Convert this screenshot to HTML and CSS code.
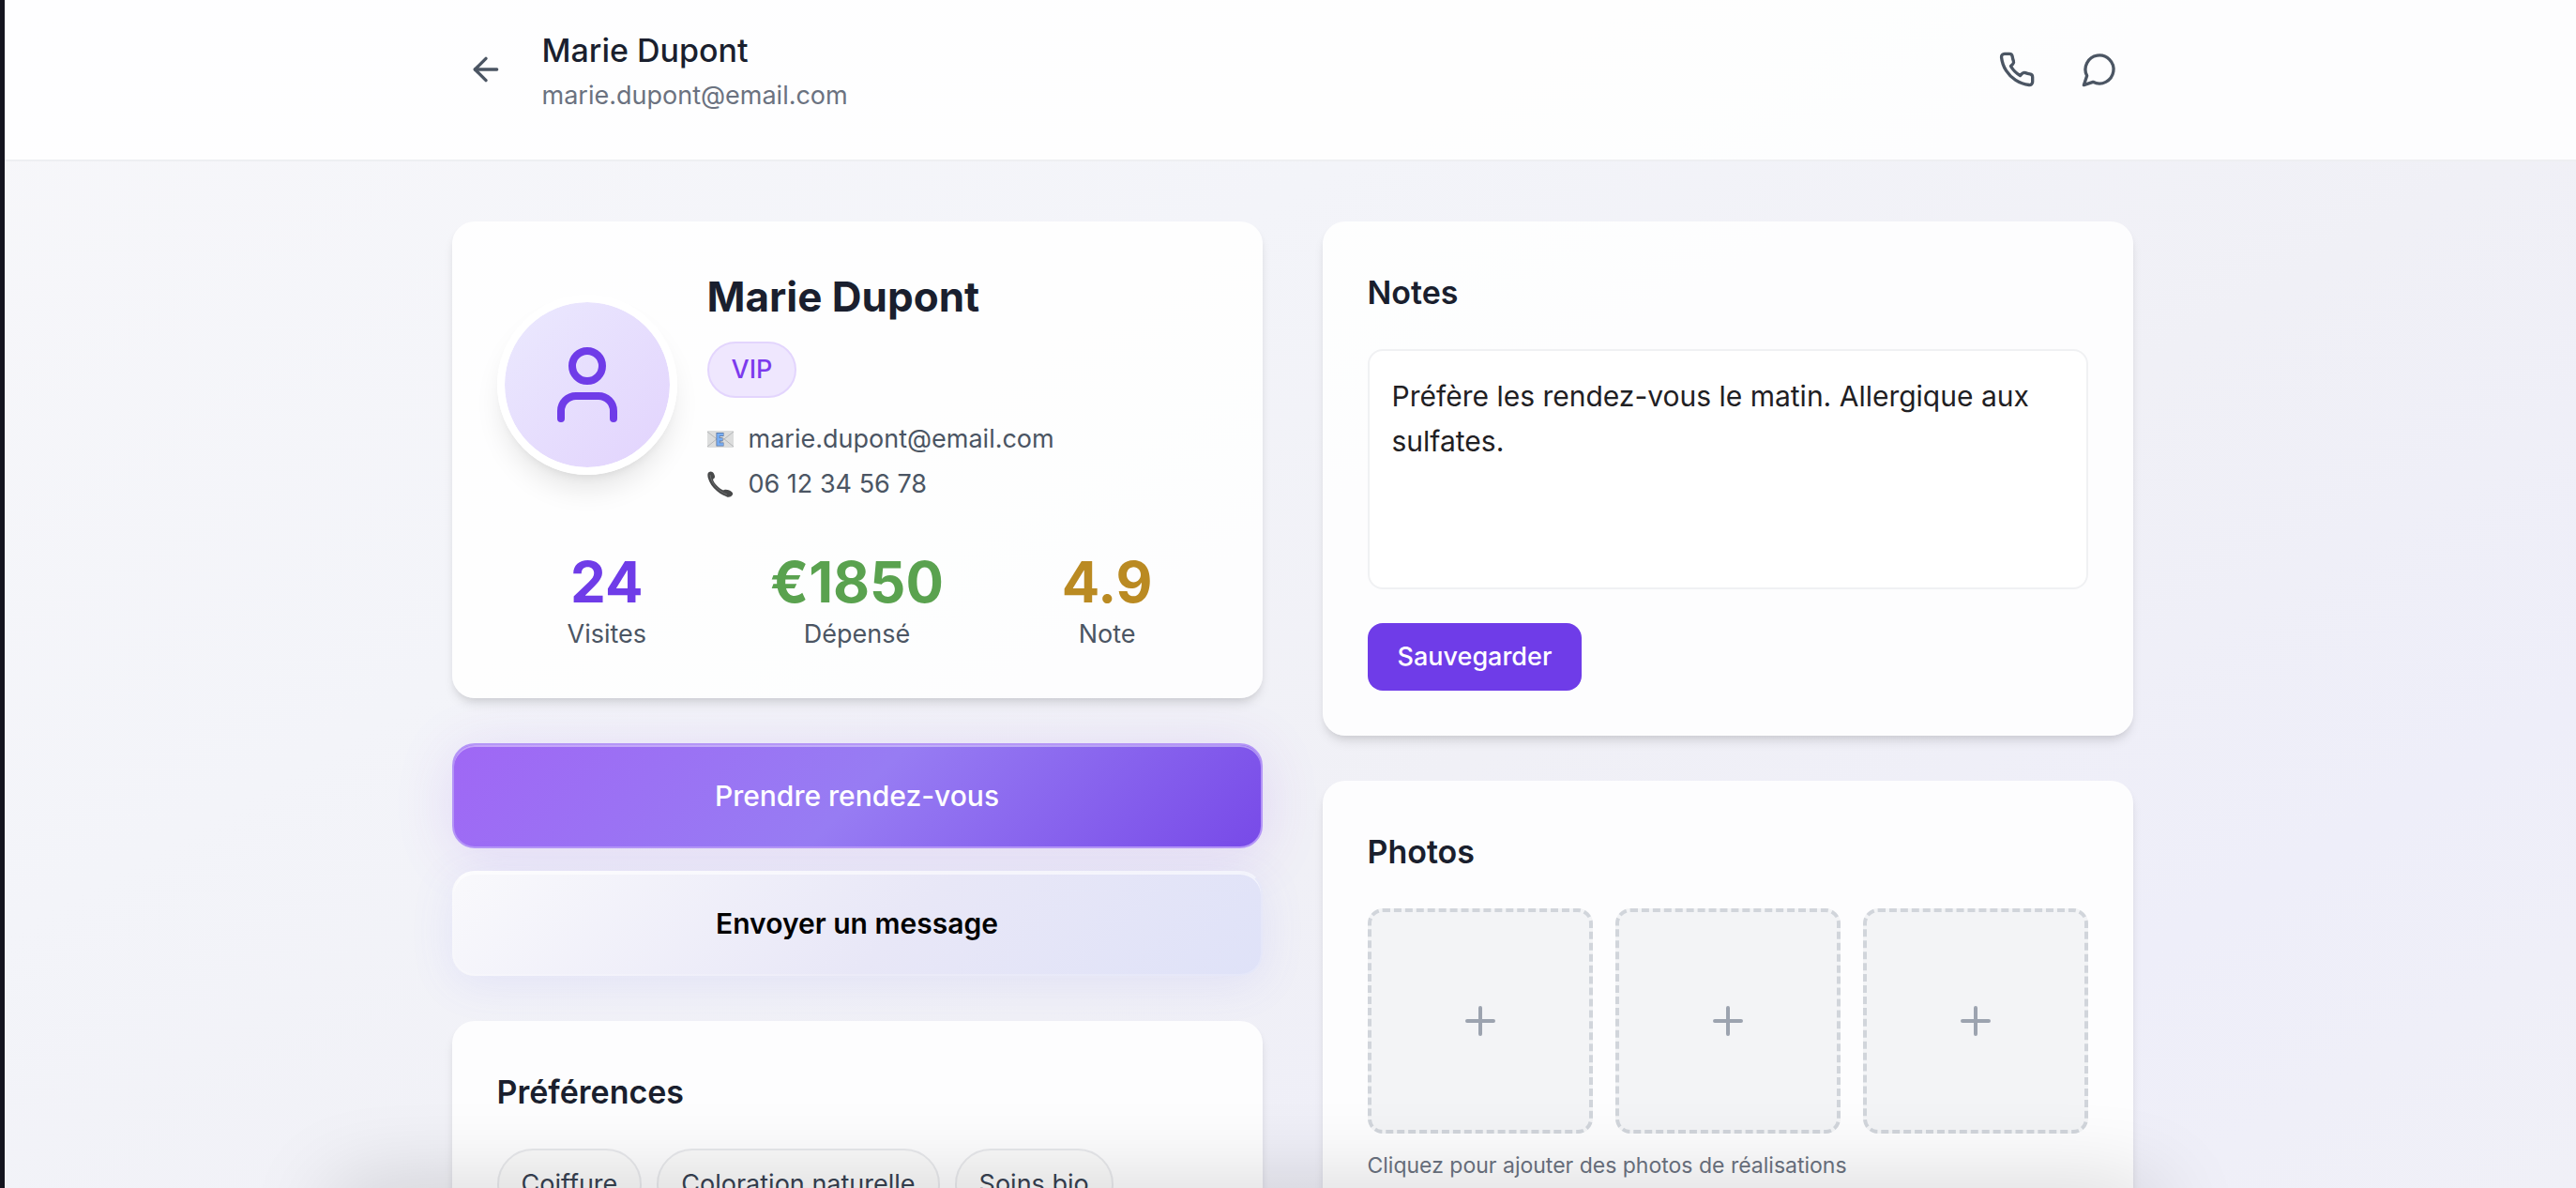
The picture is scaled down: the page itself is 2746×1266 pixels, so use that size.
FILE: index.html
```html
<!DOCTYPE html>
<html lang="fr">
<head>
<meta charset="utf-8">
<meta name="viewport" content="width=device-width, initial-scale=1">
<title>Marie Dupont – Fiche cliente</title>
<link rel="stylesheet" href="styles.css">
</head>
<body>
<div class="page">
  <header class="topbar">
    <div class="container topbar-inner">
      <a class="icon-btn" href="#" aria-label="Retour">
        <svg class="icon" viewBox="0 0 24 24"><path d="m12 19-7-7 7-7"/><path d="M19 12H5"/></svg>
      </a>
      <div class="topbar-title">
        <h1>Marie Dupont</h1>
        <p>marie.dupont@email.com</p>
      </div>
      <div class="topbar-actions">
        <button class="icon-btn" type="button" aria-label="Appeler">
          <svg class="icon" viewBox="0 0 24 24"><path d="M22 16.92v3a2 2 0 0 1-2.18 2 19.79 19.79 0 0 1-8.63-3.07 19.5 19.5 0 0 1-6-6 19.79 19.79 0 0 1-3.07-8.67A2 2 0 0 1 4.11 2h3a2 2 0 0 1 2 1.72 12.84 12.84 0 0 0 .7 2.81 2 2 0 0 1-.45 2.11L8.09 9.91a16 16 0 0 0 6 6l1.27-1.27a2 2 0 0 1 2.11-.45 12.84 12.84 0 0 0 2.81.7A2 2 0 0 1 22 16.92z"/></svg>
        </button>
        <button class="icon-btn" type="button" aria-label="Message">
          <svg class="icon" viewBox="0 0 24 24"><path d="M7.9 20A9 9 0 1 0 4 16.1L2 22Z"/></svg>
        </button>
      </div>
    </div>
  </header>

  <main class="container columns">
    <div class="column">
      <section class="card">
        <div class="profile">
          <div class="avatar">
            <svg class="avatar-icon" viewBox="0 0 24 24"><circle cx="12" cy="7" r="4"/><path d="M19 21v-2a4 4 0 0 0-4-4H9a4 4 0 0 0-4 4v2"/></svg>
          </div>
          <div class="profile-info">
            <h2 class="profile-name">Marie Dupont</h2>
            <span class="badge">VIP</span>
            <ul class="contacts">
              <li>
                <svg class="contact-icon" viewBox="0 0 28 28" aria-hidden="true">
                  <rect x="0" y="5" width="28" height="18" rx="1" fill="#dcdddd"/>
                  <path d="M0 6l14 11L28 6M0 22l11-9M28 22l-11-9" fill="none" stroke="#b4b6b8" stroke-width="1"/>
                  <path d="M17.500 9H11.500v10.500h6M11.500 14.200h5" fill="none" stroke="#56719c" stroke-width="4"/>
                  <path d="M17 9H11.500v10.500H17M11.500 14.200h4.500" fill="none" stroke="#78aef5" stroke-width="2.500"/>
                </svg>
                <span>marie.dupont@email.com</span>
              </li>
              <li>
                <svg class="contact-icon" viewBox="0 0 28 28" aria-hidden="true">
                  <path d="M2 1C5-1 8 3 8 6c0 2-2 2-2 3 1 4 6 9 10 11 2 1 2-1 5 0 3 0 7 3 6 5s-4 4-7 2C10 23 3 15 1 8 0 5 0 2 2 1z" fill="#48494a"/>
                  <path d="M3 4c1 9 8 17 18 21" fill="none" stroke="#6d6f70" stroke-width="1"/>
                </svg>
                <span>06 12 34 56 78</span>
              </li>
            </ul>
          </div>
        </div>
        <dl class="stats">
          <div class="stat"><dt>Visites</dt><dd class="visits">24</dd></div>
          <div class="stat"><dt>Dépensé</dt><dd class="spent">€1850</dd></div>
          <div class="stat"><dt>Note</dt><dd class="rating">4.9</dd></div>
        </dl>
      </section>

      <div class="actions">
        <button class="action action-primary" type="button">Prendre rendez-vous</button>
        <button class="action action-secondary" type="button">Envoyer un message</button>
      </div>

      <section class="card">
        <h3 class="card-title">Préférences</h3>
        <ul class="tags">
          <li>Coiffure</li>
          <li>Coloration naturelle</li>
          <li>Soins bio</li>
        </ul>
      </section>
    </div>

    <div class="column">
      <section class="card">
        <h3 class="card-title"><label for="notes">Notes</label></h3>
        <textarea id="notes" class="notes">Préfère les rendez-vous le matin. Allergique aux sulfates.</textarea>
        <button class="save" type="button">Sauvegarder</button>
      </section>

      <section class="card">
        <h3 class="card-title">Photos</h3>
        <div class="photos">
          <button class="photo" type="button" aria-label="Ajouter une photo"><svg class="plus" viewBox="0 0 24 24"><path d="M5 12h14M12 5v14"/></svg></button>
          <button class="photo" type="button" aria-label="Ajouter une photo"><svg class="plus" viewBox="0 0 24 24"><path d="M5 12h14M12 5v14"/></svg></button>
          <button class="photo" type="button" aria-label="Ajouter une photo"><svg class="plus" viewBox="0 0 24 24"><path d="M5 12h14M12 5v14"/></svg></button>
        </div>
        <p class="hint">Cliquez pour ajouter des photos de réalisations</p>
      </section>
    </div>
  </main>
  <div class="bottom-shade"></div>
</div>
</body>
</html>
```
FILE: styles.css
```css
*, *::before, *::after { box-sizing: border-box; }

body, h1, h2, h3, p, ul, dl, dd { margin: 0; padding: 0; }
ul { list-style: none; }
button, textarea { font: inherit; margin: 0; }
button { cursor: pointer; }

body {
  font-family: Inter, "Liberation Sans", sans-serif;
  font-size: 27px;
  line-height: 40px;
  color: #1a1f2e;
  background: #14141f;
}

.page {
  position: relative;
  height: 100vh;
  margin-left: 5px;
  overflow: hidden;
  background: linear-gradient(150deg, #f7f7fa 0%, #f3f4f9 35%, #f0f0f6 60%, #eeeef9 82%, #f0f0f7 100%);
}

.container {
  width: 100%;
  max-width: 1860px;
  margin: 0 auto;
  padding: 0 32px 0 36px;
}

.topbar {
  height: 172px;
  padding-top: 26px;
  background: rgba(255, 255, 255, 0.85);
  border-bottom: 2px solid #eeeff2;
}

.topbar-inner {
  display: flex;
  align-items: center;
  gap: 24px;
}

.topbar-title { flex: 1; }

.topbar-title h1 {
  font-size: 34px;
  font-weight: 500;
  line-height: 56px;
}

.topbar-title p { color: #6b7280; }

.topbar-actions { display: flex; gap: 16px; }

.icon-btn {
  display: flex;
  align-items: center;
  justify-content: center;
  width: 72px;
  height: 72px;
  padding: 0;
  border: 0;
  background: none;
  color: #4b5563;
}

.icon {
  width: 40px;
  height: 40px;
  fill: none;
  stroke: currentColor;
  stroke-width: 2;
  stroke-linecap: round;
  stroke-linejoin: round;
}

.columns {
  display: grid;
  grid-template-columns: 1fr 1fr;
  gap: 64px;
  align-items: start;
  padding-top: 64px;
}

.column {
  display: flex;
  flex-direction: column;
  gap: 48px;
}

.card {
  padding: 48px;
  border-radius: 24px;
  background: rgba(255, 255, 255, 0.85);
  box-shadow: 0 8px 12px -2px rgba(0, 0, 0, 0.1), 0 4px 8px -4px rgba(0, 0, 0, 0.1);
}

.card-title {
  margin-bottom: 32px;
  font-size: 34px;
  font-weight: 600;
  line-height: 56px;
}

.profile {
  display: flex;
  align-items: center;
  gap: 32px;
  margin-bottom: 48px;
}

.avatar {
  display: flex;
  flex: none;
  align-items: center;
  justify-content: center;
  width: 192px;
  height: 192px;
  border: 8px solid #fff;
  border-radius: 50%;
  background: linear-gradient(135deg, #ebe9fe, #e2d3fd) padding-box;
  box-shadow: 0 20px 30px -6px rgba(0, 0, 0, 0.1), 0 8px 12px -8px rgba(0, 0, 0, 0.1);
}

.avatar-icon {
  width: 96px;
  height: 96px;
  fill: none;
  stroke: #6f3ce8;
  stroke-width: 2;
  stroke-linecap: round;
  stroke-linejoin: round;
}

.profile-name {
  margin-bottom: 16px;
  font-size: 44px;
  font-weight: 700;
  line-height: 64px;
}

.badge {
  display: inline-block;
  padding: 8px 24px;
  border: 2px solid #e3d5fd;
  border-radius: 32px;
  background: #efe7fe;
  color: #7c3aed;
  font-weight: 500;
}

.contacts {
  display: grid;
  gap: 8px;
  margin-top: 24px;
  color: #4b5563;
}

.contacts li {
  display: flex;
  align-items: center;
  gap: 16px;
}

.contact-icon { width: 28px; height: 28px; }

.stats {
  display: grid;
  grid-template-columns: repeat(3, 1fr);
  gap: 32px;
  text-align: center;
}

.stat { display: flex; flex-direction: column-reverse; }
.stat dt { color: #4b5563; }
.stat dd { font-size: 60px; font-weight: 700; line-height: 72px; }
.stat .visits { color: #6f3ce8; }
.stat .spent { color: #5aa24f; }
.stat .rating { color: #ba8a22; }

.actions {
  display: flex;
  flex-direction: column;
  gap: 24px;
}

.action {
  height: 112px;
  border-radius: 24px;
  font-size: 30px;
  font-weight: 500;
}

.action-primary {
  border: 2px solid #b495f7;
  background: linear-gradient(135deg, #9f67f5 0%, #977cf3 50%, #784ae8 100%);
  color: #fff;
  box-shadow: 0 8px 64px rgba(124, 58, 237, 0.14), inset 0 2px 0 rgba(255, 255, 255, 0.4);
}

.action-secondary {
  border: 2px solid rgba(255, 255, 255, 0.2);
  border-top-color: rgba(255, 255, 255, 0.6);
  background: linear-gradient(135deg, #f9f9fc 0%, #e8e7f7 55%, #dfe2f8 100%) border-box;
  color: #000;
  font-weight: 600;
  box-shadow: 0 8px 48px rgba(99, 102, 241, 0.1), inset 0 2px 0 rgba(255, 255, 255, 0.6);
}

.tags {
  display: flex;
  flex-wrap: wrap;
  gap: 16px;
}

.tags li {
  padding: 16px 24px;
  border: 2px solid #e8e9ec;
  border-radius: 40px;
  background: #fafafa;
  color: #374151;
}

.notes {
  display: block;
  width: 100%;
  height: 256px;
  margin-bottom: 36px;
  padding: 24px;
  border: 2px solid #f0f1f3;
  border-radius: 16px;
  background: #fff;
  color: #1f2023;
  font-size: 30px;
  line-height: 48px;
  resize: none;
}

.save {
  height: 72px;
  padding: 0 32px;
  border: 0;
  border-radius: 16px;
  background: #6f3ce8;
  color: #fff;
  font-weight: 500;
}

.photos {
  display: grid;
  grid-template-columns: repeat(3, 1fr);
  gap: 24px;
}

.photo {
  display: flex;
  align-items: center;
  justify-content: center;
  aspect-ratio: 1;
  padding: 0;
  border: 4px dashed #d1d5db;
  border-radius: 16px;
  background: #f3f4f6;
}

.plus {
  width: 48px;
  height: 48px;
  fill: none;
  stroke: #9ca3af;
  stroke-width: 2;
  stroke-linecap: round;
}

.hint {
  margin-top: 16px;
  color: #6b7280;
  font-size: 23px;
  line-height: 36px;
}

/* Soft shade rising from the bottom edge, over the content */
.bottom-shade {
  position: absolute;
  top: 100%;
  left: 352px;
  right: 448px;
  height: 64px;
  box-shadow: 0 4px 96px rgba(0, 0, 0, 0.2);
}
```
